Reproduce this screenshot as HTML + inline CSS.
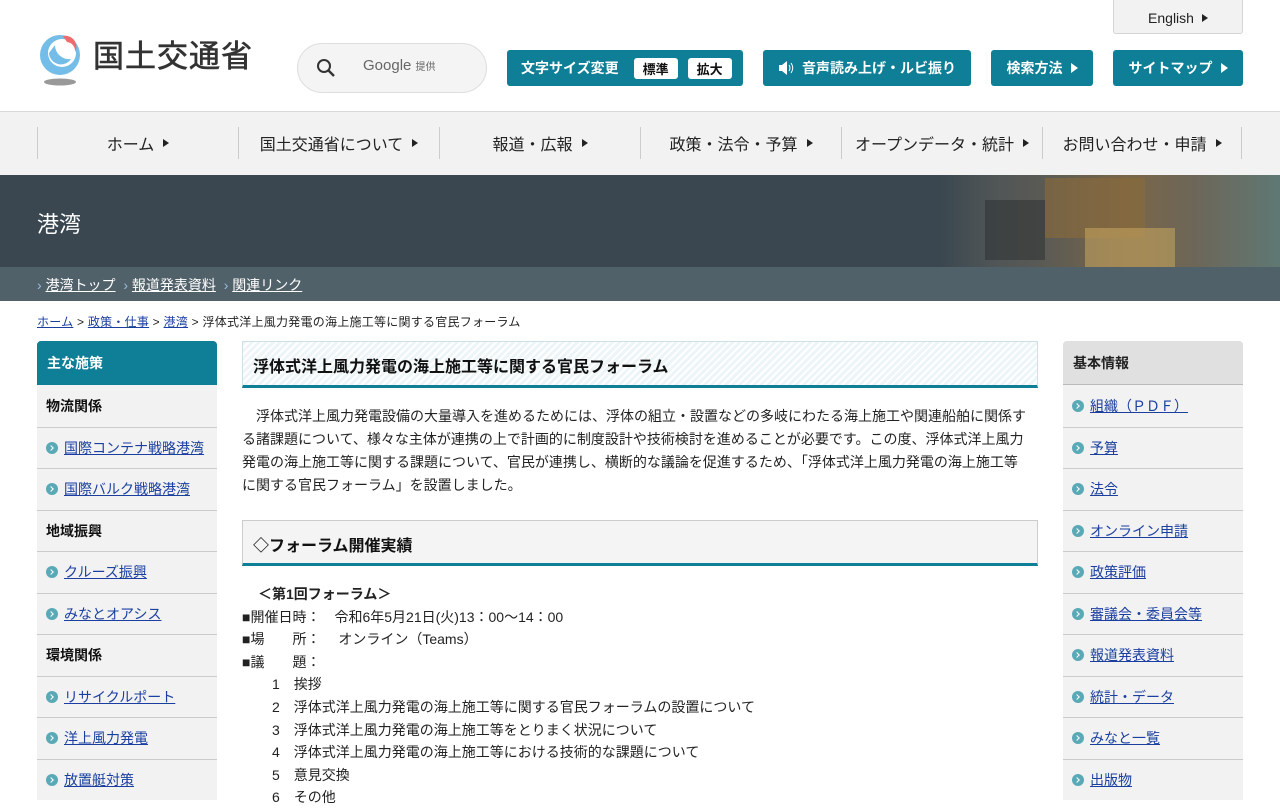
<!DOCTYPE html>
<html><head><meta charset="utf-8">
<style>
*{box-sizing:border-box;margin:0;padding:0}
body{width:1280px;height:800px;overflow:hidden;background:#fff;font-family:"Liberation Sans","Noto Sans CJK JP",sans-serif;color:#222;position:relative}
.abs{position:absolute}
.btn{position:absolute;top:50px;height:36px;background:#0e7f96;color:#fff;border-radius:3px;font-size:14px;font-weight:bold;display:flex;align-items:center;justify-content:center;gap:8px}
.tri{display:inline-block;width:0;height:0;border-left:7px solid currentColor;border-top:5px solid transparent;border-bottom:5px solid transparent}
.nav{position:absolute;top:111px;left:0;width:1280px;height:64px;background:#f2f2f2;border-top:1px solid #d8d8d8}
.nav div{position:absolute;top:15px;height:32px;width:201px;border-left:1px solid #ccc;display:flex;align-items:center;justify-content:center;gap:9px;font-size:16px;color:#222}
.nav .tri{border-left-width:6px;border-top-width:4px;border-bottom-width:4px}
a{color:#1a3fa0;text-decoration:underline}
.side{position:absolute;top:341px;width:180px;background:#f2f2f2;border-radius:4px 4px 0 0;overflow:hidden}
.side .h{height:44px;display:flex;align-items:center;padding-left:10px;font-size:14px;font-weight:bold}
.side .c{height:41.5px;border-top:1px solid #ccc;display:flex;align-items:center;padding-left:9px;font-size:14px;font-weight:bold;color:#111}
.side .l{height:41.5px;border-top:1px solid #ccc;display:flex;align-items:center;padding-left:9px;font-size:14px}
.dot{width:12px;height:12px;border-radius:50%;background:#5aa9b6;margin-right:6px;position:relative;flex:none}
.dot:after{content:"";position:absolute;left:3px;top:4px;width:3px;height:3px;border-top:1px solid #fff;border-right:1px solid #fff;transform:rotate(45deg)}
.main{position:absolute;left:242px;width:796px}
.p{font-size:14px;line-height:23px;color:#222}
</style></head><body>

<svg class="abs" style="left:37px;top:33px" width="50" height="54" viewBox="0 0 50 54">
<circle cx="23" cy="22" r="20" fill="#74bde8"/>
<circle cx="25" cy="20" r="14" fill="#fff"/>
<path d="M26 3 a11 11 0 0 1 12 16 a9 9 0 0 0 -8 -10 z" fill="#ef6b6b"/>
<path d="M12 20 a12 12 0 0 0 22 6 a14 14 0 0 1 -16 -14 z" fill="#74bde8"/>
<ellipse cx="23" cy="49" rx="16" ry="3.5" fill="#999"/>
</svg>
<div class="abs" style="left:93px;top:36px;font-size:31px;color:#333;letter-spacing:1px;line-height:42px;-webkit-text-stroke:.6px #333">国土交通省</div>

<div class="abs" style="left:297px;top:43px;width:190px;height:50px;border:1px solid #ddd;border-radius:25px;background:#f4f4f4"></div>
<svg class="abs" style="left:316px;top:58px" width="20" height="20" viewBox="0 0 20 20"><circle cx="8" cy="8" r="6" fill="none" stroke="#333" stroke-width="2"/><line x1="12.5" y1="12.5" x2="18" y2="18" stroke="#333" stroke-width="2.4"/></svg>
<div class="abs" style="left:363px;top:57px;font-size:15px;color:#666">Google <span style="font-size:10px">提供</span></div>

<div class="abs" style="left:1113px;top:-2px;width:130px;height:36px;background:#f2f2f2;border:1px solid #d5d5d5;border-radius:0 0 3px 3px;display:flex;align-items:center;justify-content:center;gap:8px;font-size:14px;padding-top:3px">English <span class="tri" style="border-left-width:6px;border-top-width:4px;border-bottom-width:4px"></span></div>

<div class="btn" style="left:507px;width:236px;gap:0;justify-content:flex-start;padding-left:14px">文字サイズ変更<span style="background:#fff;color:#111;border-radius:3px;padding:1px 9px;margin-left:15px;font-size:13px">標準</span><span style="background:#fff;color:#111;border-radius:3px;padding:1px 9px;margin-left:10px;font-size:13px">拡大</span></div>
<div class="btn" style="left:763px;width:208px"><svg width="16" height="16" viewBox="0 0 16 16"><path d="M1 5h3l5-4v14l-5-4H1z" fill="#fff"/><path d="M11 5q2 3 0 6M13 3q3.5 5 0 10" stroke="#fff" fill="none" stroke-width="1"/></svg>音声読み上げ・ルビ振り</div>
<div class="btn" style="left:991px;width:102px">検索方法 <span class="tri"></span></div>
<div class="btn" style="left:1113px;width:130px">サイトマップ <span class="tri"></span></div>

<div class="nav">
<div style="left:37px">ホーム<span class="tri"></span></div>
<div style="left:238px">国土交通省について<span class="tri"></span></div>
<div style="left:439px">報道・広報<span class="tri"></span></div>
<div style="left:640px">政策・法令・予算<span class="tri"></span></div>
<div style="left:841px">オープンデータ・統計<span class="tri"></span></div>
<div style="left:1042px;width:200px;border-right:1px solid #ccc">お問い合わせ・申請<span class="tri"></span></div>
</div>

<div class="abs" style="left:0;top:175px;width:1280px;height:92px;background:#3a4750"></div>
<div class="abs" style="left:940px;top:175px;width:340px;height:92px;background:linear-gradient(90deg,#3a4750 0%,#4f5556 15%,#5a5a55 30%,#7a6648 55%,#6d6658 75%,#5f7874 100%)"></div>
<div class="abs" style="left:1045px;top:178px;width:100px;height:60px;background:#8a6a3a;opacity:.6"></div>
<div class="abs" style="left:1085px;top:228px;width:90px;height:39px;background:#c9a860;opacity:.55"></div>
<div class="abs" style="left:985px;top:200px;width:60px;height:60px;background:#2a2e30;opacity:.5"></div>
<div class="abs" style="left:37px;top:207px;color:#fff;font-size:22px">港湾</div>

<div class="abs" style="left:0;top:267px;width:1280px;height:34px;background:#51616a;font-size:14px;color:#fff;padding:8px 0 0 37px">
<span style="color:#9bd">›</span> <a style="color:#fff">港湾トップ</a>&nbsp;&nbsp;<span style="color:#9bd">›</span> <a style="color:#fff">報道発表資料</a>&nbsp;&nbsp;<span style="color:#9bd">›</span> <a style="color:#fff">関連リンク</a></div>

<div class="abs" style="left:37px;top:313px;font-size:12px;letter-spacing:.25px;color:#222"><a>ホーム</a> &gt; <a>政策・仕事</a> &gt; <a>港湾</a> &gt; 浮体式洋上風力発電の海上施工等に関する官民フォーラム</div>

<div class="side" style="left:37px">
<div class="h" style="background:#0e7f96;color:#fff">主な施策</div>
<div class="c" style="border-top:none">物流関係</div>
<div class="l"><span class="dot"></span><a>国際コンテナ戦略港湾</a></div>
<div class="l"><span class="dot"></span><a>国際バルク戦略港湾</a></div>
<div class="c">地域振興</div>
<div class="l"><span class="dot"></span><a>クルーズ振興</a></div>
<div class="l"><span class="dot"></span><a>みなとオアシス</a></div>
<div class="c">環境関係</div>
<div class="l"><span class="dot"></span><a>リサイクルポート</a></div>
<div class="l"><span class="dot"></span><a>洋上風力発電</a></div>
<div class="l"><span class="dot"></span><a>放置艇対策</a></div>
</div>

<div class="side" style="left:1063px">
<div class="h" style="background:#e0e0e0;border-bottom:1px solid #bbb">基本情報</div>
<div class="l" style="border-top:none"><span class="dot"></span><a>組織（ＰＤＦ）</a></div>
<div class="l"><span class="dot"></span><a>予算</a></div>
<div class="l"><span class="dot"></span><a>法令</a></div>
<div class="l"><span class="dot"></span><a>オンライン申請</a></div>
<div class="l"><span class="dot"></span><a>政策評価</a></div>
<div class="l"><span class="dot"></span><a>審議会・委員会等</a></div>
<div class="l"><span class="dot"></span><a>報道発表資料</a></div>
<div class="l"><span class="dot"></span><a>統計・データ</a></div>
<div class="l"><span class="dot"></span><a>みなと一覧</a></div>
<div class="l"><span class="dot"></span><a>出版物</a></div>
</div>

<div class="main" style="top:341px;height:47px;border:1px solid #cde0e4;border-bottom:3px solid #0e7f96;background:repeating-linear-gradient(135deg,#eef5f7 0 3px,#fff 3px 5px);padding:11px 0 0 10px;font-size:16px;font-weight:bold;color:#111">浮体式洋上風力発電の海上施工等に関する官民フォーラム</div>

<div class="main p" style="top:405px;width:790px">&emsp;浮体式洋上風力発電設備の大量導入を進めるためには、浮体の組立・設置などの多岐にわたる海上施工や関連船舶に関係す<br>る諸課題について、様々な主体が連携の上で計画的に制度設計や技術検討を進めることが必要です。この度、浮体式洋上風力<br>発電の海上施工等に関する課題について、官民が連携し、横断的な議論を促進するため、「浮体式洋上風力発電の海上施工等<br>に関する官民フォーラム」を設置しました。</div>

<div class="main" style="top:520px;height:46px;border:1px solid #ccc;border-bottom:3px solid #0e7f96;background:#f4f4f4;padding:11px 0 0 10px;font-size:16px;font-weight:bold;color:#111">◇フォーラム開催実績</div>

<div class="main p" style="top:583px;line-height:22.6px;font-size:14px">
<div style="font-weight:bold;padding-left:16px">＜第1回フォーラム＞</div>
<div>■開催日時：　令和6年5月21日(火)13：00～14：00</div>
<div>■場　　所：　 オンライン（Teams）</div>
<div>■議　　題：</div>
<div style="padding-left:30px">1　挨拶</div>
<div style="padding-left:30px">2　浮体式洋上風力発電の海上施工等に関する官民フォーラムの設置について</div>
<div style="padding-left:30px">3　浮体式洋上風力発電の海上施工等をとりまく状況について</div>
<div style="padding-left:30px">4　浮体式洋上風力発電の海上施工等における技術的な課題について</div>
<div style="padding-left:30px">5　意見交換</div>
<div style="padding-left:30px">6　その他</div>
</div>
</body></html>
